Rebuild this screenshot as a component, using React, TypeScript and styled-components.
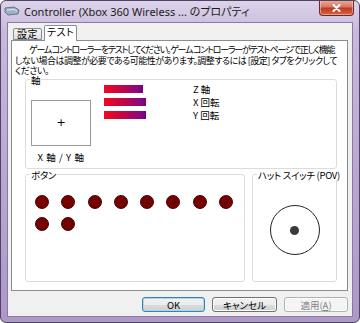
import React from 'react'
import styled, { createGlobalStyle } from 'styled-components'

const GlobalStyle = createGlobalStyle`
  html, body {
    margin: 0;
    padding: 0;
    background: #ffffff;
  }
  body {
    font-family: "Noto Sans CJK JP", "Noto Sans", sans-serif;
    color: #000;
  }
`

const JP = `"Noto Sans CJK JP", "Noto Sans", sans-serif`

const Window = styled.div`
  width: 360px;
  height: 323px;
  box-sizing: border-box;
  display: flex;
  flex-direction: column;
  border: 1px solid #4f4262;
  border-radius: 6px;
  background: linear-gradient(180deg, #ddd3ea 0%, #c7b8dc 10%, #b9a7d1 55%, #ad98c8 100%);
  overflow: hidden;
`

const TitleBar = styled.div`
  height: 21px;
  display: flex;
  align-items: flex-start;
  flex-shrink: 0;
`

const TitleIcon = styled.svg`
  margin: 5px 0 0 3px;
  flex-shrink: 0;
`

const TitleText = styled.div`
  margin-left: 4px;
  font-family: "Noto Sans", ${JP};
  font-size: 11px;
  line-height: 21px;
  white-space: nowrap;
  color: #1a1a1a;
  font-feature-settings: "palt" 1;
`

const CloseButton = styled.div`
  margin: -1px 5px 0 auto;
  width: 35px;
  height: 16px;
  box-sizing: border-box;
  border: 1px solid #6b2a22;
  border-top: none;
  border-radius: 0 0 4px 4px;
  background: linear-gradient(180deg, #eab0a0 0%, #d9775f 45%, #c23a22 55%, #d4644a 100%);
  box-shadow: inset 0 0 0 1px rgba(255, 220, 210, 0.5);
  display: flex;
  align-items: center;
  justify-content: center;
`

const Client = styled.div`
  flex: 1;
  margin: 0 6px 5px 6px;
  box-sizing: border-box;
  border: 1px solid #8a7aa2;
  background: #f0f0f0;
  display: flex;
  flex-direction: column;
  padding: 2px 4px 4px 3px;
  min-height: 0;
`

const TabStrip = styled.div`
  display: flex;
  align-items: flex-end;
  height: 15px;
  padding-left: 2px;
  position: relative;
  z-index: 1;
`

const Tab = styled.div<{ active?: boolean; w: number }>`
  box-sizing: border-box;
  width: ${({ w }) => w}px;
  height: ${({ active }) => (active ? '16px' : '12px')};
  margin-bottom: ${({ active }) => (active ? '-1px' : '0')};
  margin-left: ${({ active }) => (active ? '2px' : '0')};
  border: 1px solid #898c95;
  border-bottom: ${({ active }) => (active ? 'none' : '1px solid #898c95')};
  border-radius: 2px 2px 0 0;
  background: ${({ active }) => (active ? '#ffffff' : 'linear-gradient(180deg, #f3f3f3 0%, #ebebeb 50%, #dcdcdc 100%)')};
  text-align: center;
  font-family: ${JP};
  font-size: 10px;
  line-height: ${({ active }) => (active ? '12px' : '10px')};
  letter-spacing: 0.5px;
  font-feature-settings: "palt" 1;
`

const Panel = styled.div`
  flex: 1;
  box-sizing: border-box;
  background: #ffffff;
  border: 1px solid #898c95;
  display: flex;
  flex-direction: column;
  padding: 4px 0 8px 0;
  min-height: 0;
`

const Intro = styled.div`
  padding: 0 2px 0 3px;
  font-family: ${JP};
  font-size: 9px;
  line-height: 10.5px;
  font-feature-settings: "palt" 1;
`

const IntroLine = styled.div<{ indent?: number; squeeze: number }>`
  white-space: nowrap;
  padding-left: ${({ indent }) => indent ?? 0}px;
  letter-spacing: ${({ squeeze }) => squeeze}px;
`

const Groups = styled.div`
  flex: 1;
  display: flex;
  flex-direction: column;
  padding: 0 10px 0 13px;
  margin-top: -2px;
`

const Group = styled.fieldset`
  margin: 0;
  padding: 0;
  min-width: 0;
  border: 1px solid #dcdcdc;
  border-radius: 3px;
  box-sizing: border-box;
`

const Legend = styled.legend`
  margin-left: 4px;
  padding: 0 1px;
  font-family: ${JP};
  font-size: 9.5px;
  line-height: 10px;
  white-space: nowrap;
  font-feature-settings: "palt" 1;
  letter-spacing: -0.3px;
`

const AxisBody = styled.div`
  display: flex;
  align-items: flex-start;
  padding: 0 0 6px 5px;
`

const XYColumn = styled.div`
  width: 60px;
  margin-top: 15px;
  display: flex;
  flex-direction: column;
  align-items: center;
`

const XYBox = styled.div`
  width: 60px;
  height: 46px;
  box-sizing: border-box;
  border: 1px solid #9a9a9a;
  background: #fff;
  display: flex;
  align-items: center;
  justify-content: center;
  font-family: "DejaVu Sans", sans-serif;
  font-size: 11px;
  line-height: 11px;
`

const XYLabel = styled.div`
  margin-top: 6px;
  font-family: ${JP};
  font-size: 9.5px;
  line-height: 10px;
  letter-spacing: 0.6px;
  font-feature-settings: "palt" 1;
  white-space: nowrap;
`

const Meters = styled.div`
  margin: 0 0 0 13px;
  display: grid;
  grid-template-columns: 42px auto;
  grid-auto-rows: 8px;
  column-gap: 47px;
  row-gap: 5px;
  align-items: center;
`

const Bar = styled.div<{ w: number }>`
  width: ${({ w }) => w}px;
  height: 8px;
  background: linear-gradient(90deg, #ee0a26 0%, #c8063e 40%, #8a0a7e 85%, #74007e 100%);
`

const MeterLabel = styled.div`
  font-family: ${JP};
  font-size: 9.5px;
  line-height: 8px;
  white-space: nowrap;
  font-feature-settings: "palt" 1;
`

const LowerRow = styled.div`
  flex: 1;
  display: flex;
  gap: 7px;
  margin-top: 1px;
  min-height: 0;
`

const ButtonsGroup = styled(Group)`
  flex: 0 0 220px;
`

const HatGroup = styled(Group)`
  flex: 1;
  display: flex;
  flex-direction: column;
`

const ButtonGrid = styled.div`
  display: grid;
  grid-template-columns: repeat(8, 14px);
  grid-auto-rows: 14px;
  column-gap: 12.3px;
  row-gap: 8px;
  padding: 15px 0 0 9px;
`

const JoyButton = styled.div`
  box-sizing: border-box;
  width: 14px;
  height: 14px;
  border-radius: 50%;
  border: 1px solid #3a0000;
  background: radial-gradient(circle at 50% 45%, #8a0000 0%, #760000 60%, #5a0000 100%);
  display: flex;
  align-items: center;
  justify-content: center;
  font-family: "Liberation Sans", sans-serif;
  font-size: 8px;
  line-height: 8px;
  color: #420000;
`

const HatBody = styled.div`
  flex: 1;
  display: flex;
  align-items: center;
  justify-content: center;
`

const HatRing = styled.div`
  width: 50px;
  height: 50px;
  box-sizing: border-box;
  border-radius: 50%;
  border: 1px solid #222;
  display: flex;
  align-items: center;
  justify-content: center;
`

const HatDot = styled.div`
  width: 9px;
  height: 9px;
  border-radius: 50%;
  background: #3a3a3a;
`

const ButtonBar = styled.div`
  display: flex;
  justify-content: flex-end;
  gap: 7px;
  margin-top: 6px;
`

const DialogButton = styled.div<{ w: number; isDefault?: boolean; disabled?: boolean }>`
  width: ${({ w }) => w}px;
  height: 15px;
  box-sizing: border-box;
  border-radius: 3px;
  border: 1px solid ${({ isDefault, disabled }) => (disabled ? '#adb2b5' : isDefault ? '#3c7fb1' : '#707070')};
  background: ${({ disabled }) =>
    disabled ? '#f4f4f4' : 'linear-gradient(180deg, #f2f2f2 0%, #ebebeb 50%, #dddddd 51%, #cfcfcf 100%)'};
  box-shadow: ${({ isDefault }) => (isDefault ? 'inset 0 0 0 1px #a6d8f0' : 'inset 0 0 0 1px #fcfcfc')};
  display: flex;
  align-items: center;
  justify-content: center;
  font-family: ${JP};
  font-size: 9.5px;
  line-height: 10px;
  font-feature-settings: "palt" 1;
  color: ${({ disabled }) => (disabled ? '#838383' : '#000')};
`

const Underline = styled.span`
  text-decoration: underline;
`

export default function App() {
  const bars = [
    { w: 39, label: 'Z 軸' },
    { w: 42, label: 'X 回転' },
    { w: 42, label: 'Y 回転' }
  ]
  const buttons = Array.from({ length: 10 }, (_, i) => i + 1)

  return (
    <>
      <GlobalStyle />
      <Window>
        <TitleBar>
          <TitleIcon width="16" height="10" viewBox="0 0 16 10">
            <path d="M1 2 L10 1 L15 4 L14 8 L4 9 L1 6 Z" fill="#9fb0c4" stroke="#50607a" strokeWidth="0.8" />
            <path d="M3 4 L10 3.5 L13 5" stroke="#e8eef6" strokeWidth="0.9" fill="none" />
          </TitleIcon>
          <TitleText>Controller (Xbox 360 Wireless ... のプロパティ</TitleText>
          <CloseButton>
            <svg width="9" height="8" viewBox="0 0 9 8">
              <path d="M1.5 1 L7.5 7 M7.5 1 L1.5 7" stroke="#ffffff" strokeWidth="2" strokeLinecap="round" />
            </svg>
          </CloseButton>
        </TitleBar>
        <Client>
          <TabStrip>
            <Tab w={29}>設定</Tab>
            <Tab w={33} active>
              テスト
            </Tab>
          </TabStrip>
          <Panel>
            <Intro>
              <IntroLine indent={14} squeeze={-1.25}>
                ゲーム コントローラーをテストしてください。ゲーム コントローラーがテスト ページで正しく機能
              </IntroLine>
              <IntroLine squeeze={-0.5}>
                しない場合は調整が必要である可能性があります。調整するには [設定] タブをクリックして
              </IntroLine>
              <IntroLine squeeze={-0.5}>ください。</IntroLine>
            </Intro>
            <Groups>
              <Group>
                <Legend>軸</Legend>
                <AxisBody>
                  <XYColumn>
                    <XYBox>+</XYBox>
                    <XYLabel>X 軸 / Y 軸</XYLabel>
                  </XYColumn>
                  <Meters>
                    {bars.map(b => (
                      <React.Fragment key={b.label}>
                        <Bar w={b.w} />
                        <MeterLabel>{b.label}</MeterLabel>
                      </React.Fragment>
                    ))}
                  </Meters>
                </AxisBody>
              </Group>
              <LowerRow>
                <ButtonsGroup>
                  <Legend>ボタン</Legend>
                  <ButtonGrid>
                    {buttons.map(n => (
                      <JoyButton key={n}>{n}</JoyButton>
                    ))}
                  </ButtonGrid>
                </ButtonsGroup>
                <HatGroup>
                  <Legend>ハット スイッチ (POV)</Legend>
                  <HatBody>
                    <HatRing>
                      <HatDot />
                    </HatRing>
                  </HatBody>
                </HatGroup>
              </LowerRow>
            </Groups>
          </Panel>
          <ButtonBar>
            <DialogButton w={63} isDefault>
              OK
            </DialogButton>
            <DialogButton w={65}>キャンセル</DialogButton>
            <DialogButton w={64} disabled>
              適用(<Underline>A</Underline>)
            </DialogButton>
          </ButtonBar>
        </Client>
      </Window>
    </>
  )
}
